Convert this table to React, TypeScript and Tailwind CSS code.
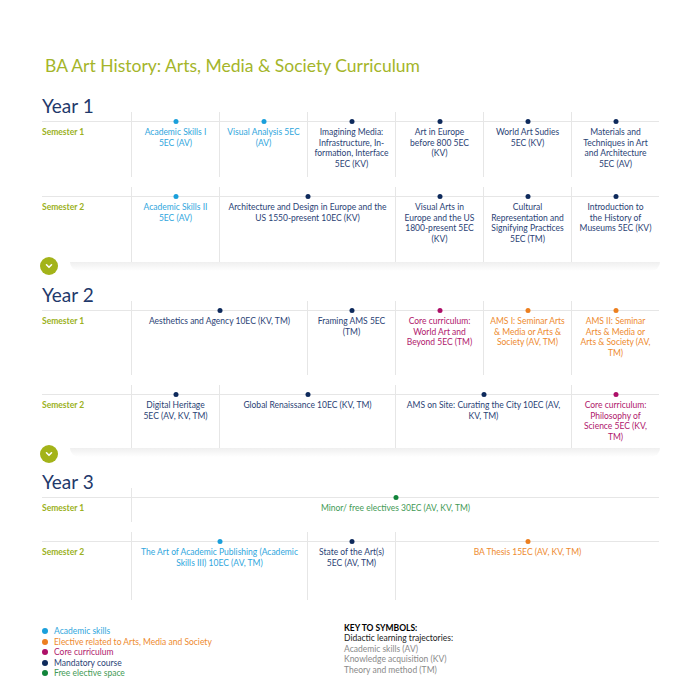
import type { ReactNode } from 'react'

type Kind = 'skills' | 'elective' | 'core' | 'mandatory' | 'free'

interface Course {
  lines: string[]
  kind: Kind
  span?: 1 | 2 | 3 | 6
}

interface Semester {
  label: string
  height: string
  courses: Course[]
}

const textColor: Record<Kind, string> = {
  skills: 'text-[#2fa6dd]',
  elective: 'text-[#ee8a2e]',
  core: 'text-[#b0176c]',
  mandatory: 'text-[#2a4275]',
  free: 'text-[#3f9a55]',
}

const dotColor: Record<Kind, string> = {
  skills: 'bg-[#1a9fdb]',
  elective: 'bg-[#ec7f1f]',
  core: 'bg-[#ad0f68]',
  mandatory: 'bg-[#0e2a5c]',
  free: 'bg-[#11843a]',
}

const spanClass = {
  1: 'col-span-1',
  2: 'col-span-2',
  3: 'col-span-3',
  6: 'col-span-6',
}

const years: { title: string; semesters: Semester[]; footer: 'chevron' | 'none' }[] = [
  {
    title: 'Year 1',
    footer: 'chevron',
    semesters: [
      {
        label: 'Semester 1',
        height: 'h-[65px]',
        courses: [
          { lines: ['Academic Skills I', '5EC (AV)'], kind: 'skills' },
          { lines: ['Visual Analysis 5EC', '(AV)'], kind: 'skills' },
          {
            lines: ['Imagining Media:', 'Infrastructure, In-', 'formation, Interface', '5EC (KV)'],
            kind: 'mandatory',
          },
          { lines: ['Art in Europe', 'before 800 5EC', '(KV)'], kind: 'mandatory' },
          { lines: ['World Art Sudies', '5EC (KV)'], kind: 'mandatory' },
          {
            lines: ['Materials and', 'Techniques in Art', 'and Architecture', '5EC (AV)'],
            kind: 'mandatory',
          },
        ],
      },
      {
        label: 'Semester 2',
        height: 'h-[75px]',
        courses: [
          { lines: ['Academic Skills II', '5EC (AV)'], kind: 'skills' },
          {
            lines: ['Architecture and Design in Europe and the', 'US 1550-present 10EC (KV)'],
            kind: 'mandatory',
            span: 2,
          },
          {
            lines: ['Visual Arts in', 'Europe and the US', '1800-present 5EC', '(KV)'],
            kind: 'mandatory',
          },
          {
            lines: ['Cultural', 'Representation and', 'Signifying Practices', '5EC (TM)'],
            kind: 'mandatory',
          },
          { lines: ['Introduction to', 'the History of', 'Museums 5EC (KV)'], kind: 'mandatory' },
        ],
      },
    ],
  },
  {
    title: 'Year 2',
    footer: 'chevron',
    semesters: [
      {
        label: 'Semester 1',
        height: 'h-[74px]',
        courses: [
          { lines: ['Aesthetics and Agency 10EC (KV, TM)'], kind: 'mandatory', span: 2 },
          { lines: ['Framing AMS 5EC', '(TM)'], kind: 'mandatory' },
          { lines: ['Core curriculum:', 'World Art and', 'Beyond 5EC (TM)'], kind: 'core' },
          {
            lines: ['AMS I: Seminar Arts', '& Media or Arts &', 'Society (AV, TM)'],
            kind: 'elective',
          },
          {
            lines: ['AMS II: Seminar', 'Arts & Media or', 'Arts & Society (AV,', 'TM)'],
            kind: 'elective',
          },
        ],
      },
      {
        label: 'Semester 2',
        height: 'h-[63px]',
        courses: [
          { lines: ['Digital Heritage', '5EC (AV, KV, TM)'], kind: 'mandatory' },
          { lines: ['Global Renaissance 10EC (KV, TM)'], kind: 'mandatory', span: 2 },
          {
            lines: ['AMS on Site: Curating the City 10EC (AV,', 'KV, TM)'],
            kind: 'mandatory',
            span: 2,
          },
          {
            lines: ['Core curriculum:', 'Philosophy of', 'Science 5EC (KV,', 'TM)'],
            kind: 'core',
          },
        ],
      },
    ],
  },
  {
    title: 'Year 3',
    footer: 'none',
    semesters: [
      {
        label: 'Semester 1',
        height: 'h-[34px]',
        courses: [{ lines: ['Minor/ free electives 30EC (AV, KV, TM)'], kind: 'free', span: 6 }],
      },
      {
        label: 'Semester 2',
        height: 'h-[68px]',
        courses: [
          {
            lines: ['The Art of Academic Publishing (Academic', 'Skills III) 10EC (AV, TM)'],
            kind: 'skills',
            span: 2,
          },
          { lines: ['State of the Art(s)', '5EC (AV, TM)'], kind: 'mandatory' },
          { lines: ['BA Thesis 15EC (AV, KV, TM)'], kind: 'elective', span: 3 },
        ],
      },
    ],
  },
]

const legend: { kind: Kind; text: string }[] = [
  { kind: 'skills', text: 'Academic skills' },
  { kind: 'elective', text: 'Elective related to Arts, Media and Society' },
  { kind: 'core', text: 'Core curriculum' },
  { kind: 'mandatory', text: 'Mandatory course' },
  { kind: 'free', text: 'Free elective space' },
]

const RuleCell = ({ children, className }: { children?: ReactNode; className?: string }) => (
  <div className={`flex flex-col ${className ?? ''}`}>
    <div className="h-[9px]" />
    <div className="relative border-t border-[#e6e6e6]">{children}</div>
  </div>
)

const CourseCell = ({ course }: { course: Course }) => (
  <RuleCell className={`${spanClass[course.span ?? 1]} border-l border-[#e6e6e6]`}>
    <span
      className={`absolute left-1/2 top-[-3px] h-[5px] w-[5px] -translate-x-1/2 rounded-full ${dotColor[course.kind]}`}
    />
    <div className={`pt-[5px] text-center text-[8.5px] leading-[10.6px] ${textColor[course.kind]}`}>
      {course.lines.map((line) => (
        <div key={line} className="whitespace-nowrap">
          {line}
        </div>
      ))}
    </div>
  </RuleCell>
)

const ChevronBadge = () => (
  <div className="flex h-[18px] w-[18px] items-center justify-center rounded-full bg-[#a3b319]">
    <svg width="10" height="10" viewBox="0 0 10 10" fill="none">
      <path d="M2.5 3.8 5 6.3l2.5-2.5" stroke="white" strokeWidth="1.6" strokeLinecap="round" strokeLinejoin="round" />
    </svg>
  </div>
)

export default function App() {
  return (
    <div className="h-[700px] w-[700px] overflow-hidden bg-white pl-[42px] pt-[56px] font-['Lato','Open_Sans',sans-serif]">
      <h1 className="pl-[3px] text-[17.5px] leading-[20px] text-[#a4b52a]">
        BA Art History: Arts, Media &amp; Society Curriculum
      </h1>

      {years.map((year, yi) => (
        <section key={year.title} className={yi === 0 ? 'mt-[19px]' : ''}>
          <h2 className="mb-[-5px] text-[19px] leading-[22px] text-[#1f396b]">{year.title}</h2>

          <div className="flex flex-col gap-[10px]">
            {year.semesters.map((sem) => (
              <div key={sem.label} className={`grid w-[617px] grid-cols-[89px_repeat(6,88px)] ${sem.height}`}>
                <RuleCell>
                  <div className="pt-[5px] text-[8.5px] font-bold leading-[10.6px] text-[#9bb122]">
                    {sem.label}
                  </div>
                </RuleCell>
                {sem.courses.map((course) => (
                  <CourseCell key={course.lines.join(' ')} course={course} />
                ))}
              </div>
            ))}
          </div>

          {year.footer === 'chevron' ? (
            <div className={`relative ${yi === 0 ? 'h-[22px]' : 'h-[23px]'}`}>
              <div className="ml-[28px] h-[9px] w-[590px] rounded-b-full bg-linear-to-b from-[#efefef] to-white" />
              <div className={`absolute left-[-2px] ${yi === 0 ? 'top-[-5px]' : 'top-[-3px]'}`}>
                <ChevronBadge />
              </div>
            </div>
          ) : null}
        </section>
      ))}

      <div className="mt-[26px] flex">
        <ul className="w-[302px] text-[8.5px] leading-[10.5px]">
          {legend.map((item) => (
            <li key={item.text} className="flex items-center gap-[6px]">
              <span className={`h-[6px] w-[6px] rounded-full ${dotColor[item.kind]}`} />
              <span className={textColor[item.kind]}>{item.text}</span>
            </li>
          ))}
        </ul>
        <div className="mt-[-3px] text-[8.5px] leading-[10.4px]">
          <div className="font-bold text-black">KEY TO SYMBOLS:</div>
          <div className="text-[#222]">Didactic learning trajectories:</div>
          <div className="text-[#8a8a8a]">Academic skills (AV)</div>
          <div className="text-[#8a8a8a]">Knowledge acquisition (KV)</div>
          <div className="text-[#8a8a8a]">Theory and method (TM)</div>
        </div>
      </div>
    </div>
  )
}
